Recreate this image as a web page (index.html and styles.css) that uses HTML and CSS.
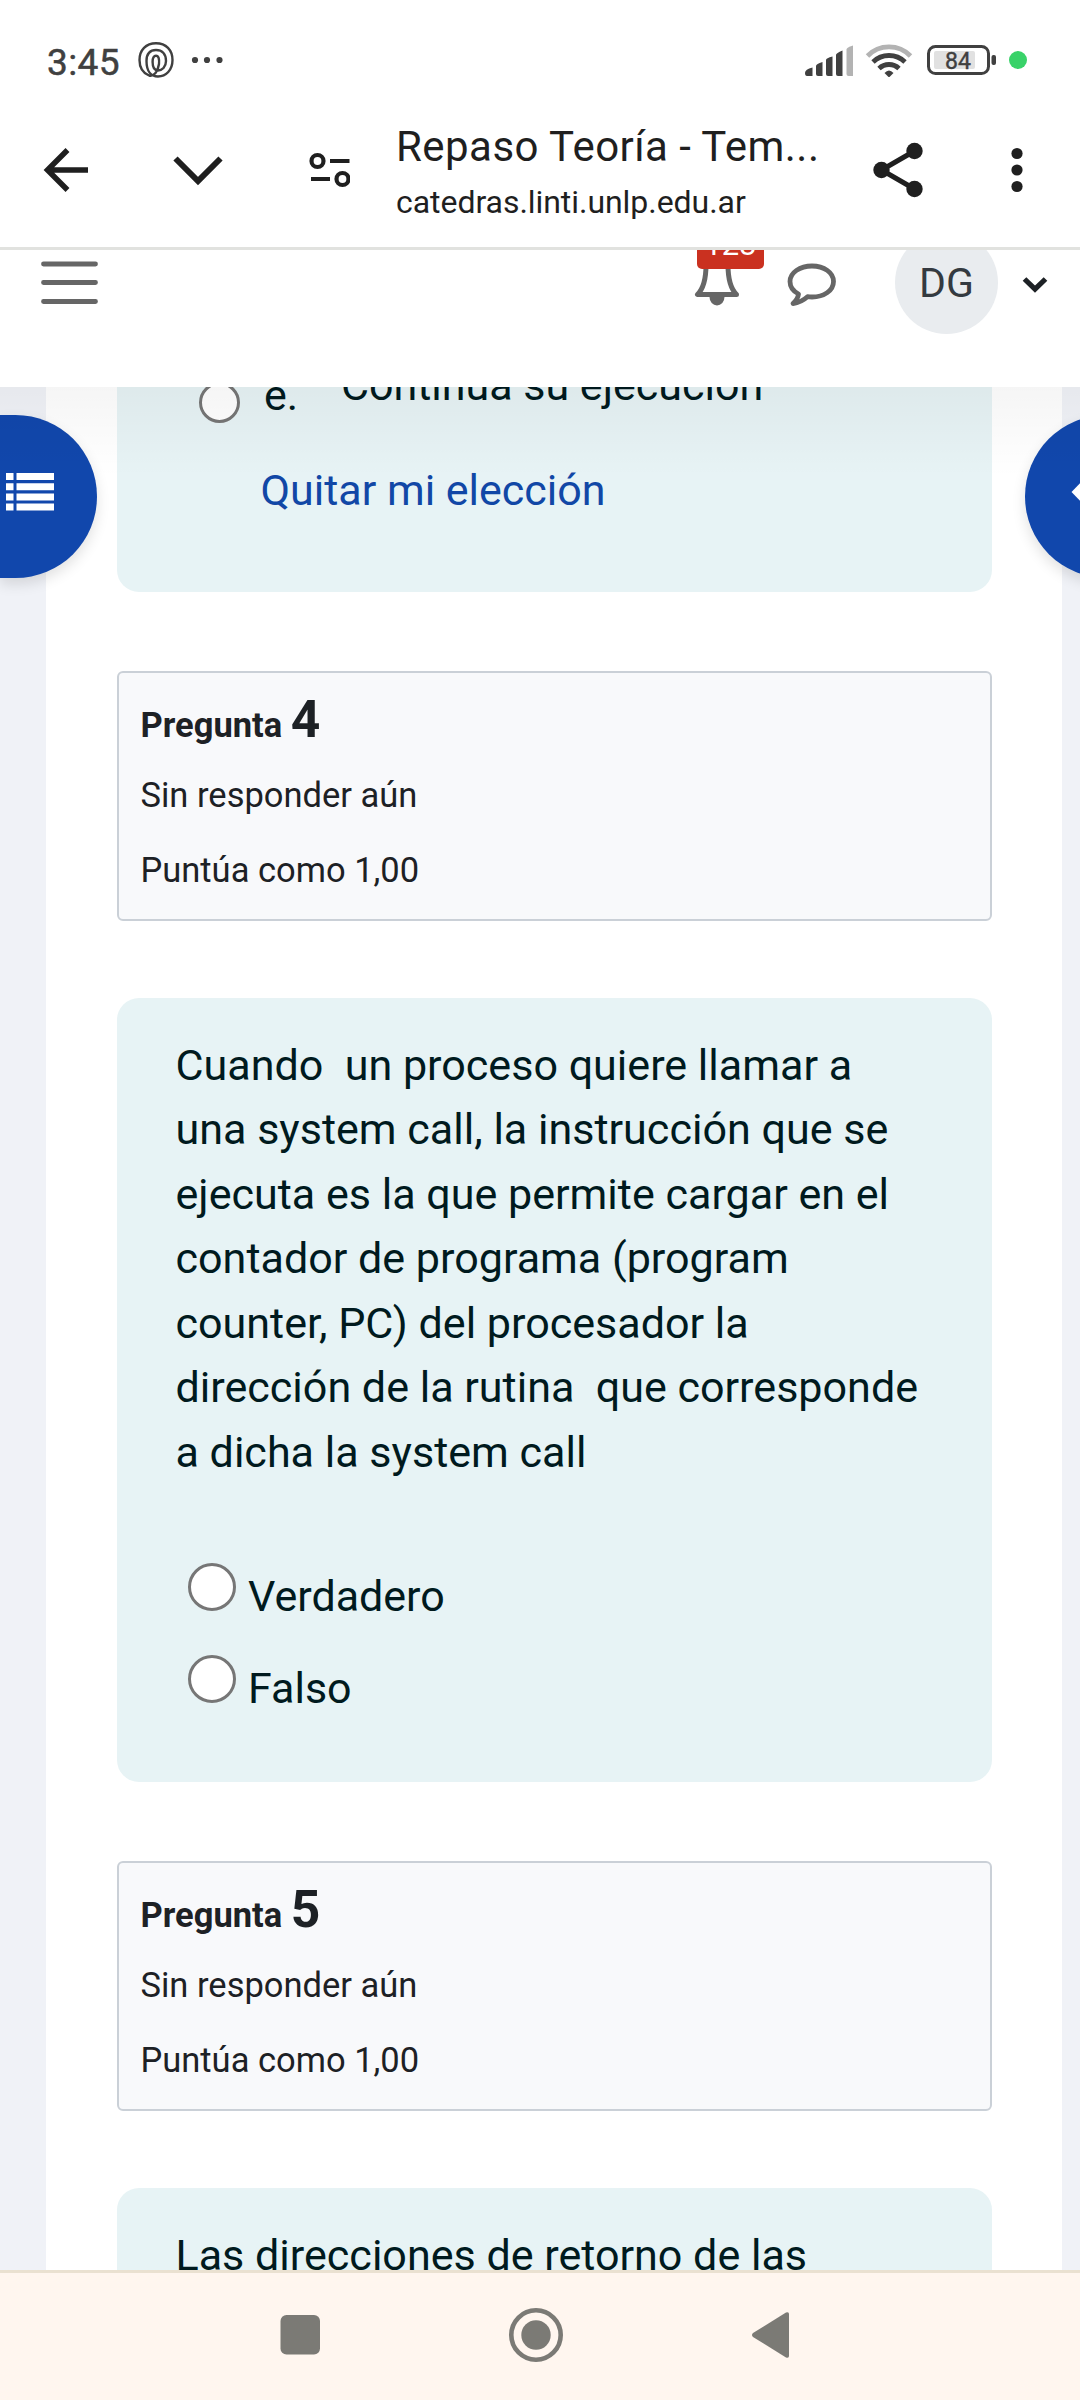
FILE: index.html
```html
<!DOCTYPE html>
<html lang="es">
<head>
<meta charset="utf-8">
<title>Repaso Teoría</title>
<link rel="stylesheet" href="styles.css">
</head>
<body>
<div class="phone">
  <div class="status">
    <span class="clock">3:45</span>
    <svg class="status-app" width="38" height="38" viewBox="137 41 38 38" fill="none" stroke="#404040" stroke-width="2.4">
      <path d="M149 75.500C143 73 139.500 67 139.500 60C139.500 50 146 43.200 156 43.200C166 43.200 172.500 50 172.500 60C172.500 70 166 76.500 158 76.500C151 76.500 146.500 71 146.500 61C146.300 54 150 50 156 50C162 50 166 54 166 61C166 67 162 70.500 158 70.500C154 70.500 152.600 67 152.600 62C152.600 58 154 55.700 156 55.700C158.500 55.700 159.500 59 159 64C158 71 154 77 149 75.500"/>
    </svg>
    <svg class="status-more" width="32" height="8" viewBox="0 0 32 8" fill="#404040"><circle cx="4" cy="4" r="3.100"/><circle cx="16" cy="4" r="3.100"/><circle cx="28.500" cy="4" r="3.100"/></svg>
    <svg class="status-icons" width="230" height="40" viewBox="800 40 230 40">
      <g fill="#404040"><path d="M805 73q0-4 7.500-5.500V76H807q-2 0-2-3zM816 66q0-2 6.500-4V76H818q-2 0-2-2zM826 60q0-2 6.500-3.500V76H828q-2 0-2-2zM836 55q0-2 6.500-4.500V76H838q-2 0-2-2z"/>
      <path fill="#b3b3b3" d="M846.500 49.500q0-2 6.500-4V76H848.500q-2 0-2-2z"/></g>
      <g fill="none" stroke="#404040" stroke-width="4.800"><path stroke="#b3b3b3" d="M867.500 56A30 30 0 0 1 910.500 56"/><path d="M873 62A23 23 0 0 1 905 62M879 68.500A14.500 14.500 0 0 1 899 68.500"/></g>
      <path fill="#404040" d="M884.500 73q4.500-5 9 0l-3.500 3.500q-1 1-2 0z"/>
      <rect x="928.500" y="46.500" width="60" height="27" rx="7" fill="none" stroke="#404040" stroke-width="3"/>
      <rect x="934" y="51" width="41" height="18" rx="2" fill="#e1e1e1"/>
      <rect x="991.500" y="55" width="4.500" height="10" rx="2" fill="#404040"/>
      <text x="958" y="69" text-anchor="middle" class="battery-text">84</text>
      <circle cx="1018" cy="60" r="9" fill="#39d269"/>
    </svg>
  </div>

  <div class="toolbar">
    <svg width="350" height="60" viewBox="0 140 350 60" fill="none" stroke="#1f1f1f">
      <path stroke-width="5.500" d="M88 170H48M67.500 150L47.500 170L67.500 190"/>
      <path stroke-width="6" d="M175.500 158.500L198 181L220.500 158.500"/>
      <g stroke-width="4.200"><circle cx="317.500" cy="161" r="6"/><circle cx="342.500" cy="179" r="6"/><path d="M330 161H349.500M311 179H330"/></g>
    </svg>
    <div class="page-id">
      <div class="page-title">Repaso Teoría - Tem...</div>
      <div class="page-url">catedras.linti.unlp.edu.ar</div>
    </div>
    <svg class="toolbar-right" width="170" height="60" viewBox="865 140 170 60" fill="#1f1f1f">
      <path d="M914.500 151L881.500 170L914.500 189" fill="none" stroke="#1f1f1f" stroke-width="5"/>
      <circle cx="881.500" cy="170" r="8.200"/><circle cx="914.500" cy="151" r="8.200"/><circle cx="914.500" cy="189" r="8.200"/>
      <circle cx="1017" cy="153.500" r="5.600"/><circle cx="1017" cy="170" r="5.600"/><circle cx="1017" cy="186.500" r="5.600"/>
    </svg>
  </div>

  <div class="web">
    <div class="site-header">
      <svg class="menu" width="57" height="46" viewBox="0 0 57 46" stroke="#666" stroke-width="4.800" stroke-linecap="round"><path d="M2.500 4H54.500M2.500 22.500H54.500M2.500 41.500H54.500"/></svg>
      <div class="bell">
        <svg width="46" height="50" viewBox="0 0 46 50"><path d="M12 8Q12 29 3.500 37.500H42.500Q34 29 34 8" fill="none" stroke="#666" stroke-width="5" stroke-linejoin="round"/><path d="M15.500 40h15a7.500 8.500 0 0 1-15 0z" fill="#666"/></svg>
        <span class="badge">123</span>
      </div>
      <svg class="chat" width="50" height="44" viewBox="0 0 50 44" fill="none" stroke="#666" stroke-width="4.800" stroke-linejoin="round"><path d="M25 3C37 3 46.500 9.500 46.500 18.500S37 34 25 34Q22.500 34 20.500 33.700Q14 39.500 6 40.500Q11 36 11.500 31Q3 26.500 3 18.500C3 9.500 13 3 25 3z"/></svg>
      <div class="avatar">DG</div>
      <svg class="caret" width="26" height="18" viewBox="0 0 26 18" fill="none" stroke="#1d2125" stroke-width="5.200"><path d="M2.500 3L13 13.200L23.500 3"/></svg>
    </div>

    <div class="content">
      <div class="sheet">
        <div class="card card-prev">
          <div class="prev-row"><span class="radio radio-small"></span><span class="letter">e.</span><span class="prev-text">Continua su ejecución</span></div>
          <div class="clear">Quitar mi elección</div>
        </div>
        <div class="info">
          <div class="info-title">Pregunta <span class="num">4</span></div>
          <div class="info-state">Sin responder aún</div>
          <div class="info-grade">Puntúa como 1,00</div>
        </div>
        <div class="card card-main">
          <div class="question">Cuando&nbsp; un proceso quiere llamar a<br>una system call, la instrucción que se<br>ejecuta es la que permite cargar en el<br>contador de programa (program<br>counter, PC) del procesador la<br>dirección de la rutina&nbsp; que corresponde<br>a dicha la system call</div>
          <div class="option"><span class="radio"></span><span class="option-text">Verdadero</span></div>
          <div class="option"><span class="radio"></span><span class="option-text">Falso</span></div>
        </div>
        <div class="info">
          <div class="info-title">Pregunta <span class="num">5</span></div>
          <div class="info-state">Sin responder aún</div>
          <div class="info-grade">Puntúa como 1,00</div>
        </div>
        <div class="card card-next">
          <div class="question">Las direcciones de retorno de las</div>
        </div>
      </div>
      <div class="drawer drawer-left"><svg width="48" height="38" viewBox="0 0 48 38" fill="#fff"><path d="M0 0h7.500v7H0zM10.500 0H48v7H10.500zM0 10.200h7.500v7H0zM10.500 10.200H48v7H10.500zM0 20.400h7.500v7H0zM10.500 20.400H48v7H10.500zM0 30.400h7.500v7H0zM10.500 30.400H48v7H10.500z"/></svg></div>
      <div class="drawer drawer-right"><svg width="20" height="38" viewBox="0 0 20 38"><path d="M0.500 19L17 2V36z" fill="#fff"/></svg></div>
      <div class="header-shade"></div>
    </div>
  </div>

  <div class="navbar">
    <svg width="1080" height="127" viewBox="0 2273 1080 127" fill="#7b7a75">
      <rect x="280.500" y="2315" width="39.500" height="39.500" rx="6"/>
      <circle cx="536" cy="2335" r="24.700" fill="none" stroke="#7b7a75" stroke-width="4.600"/><circle cx="536" cy="2335" r="14.700"/>
      <path d="M753 2333L786 2312.500Q789 2311.500 789 2314V2356Q789 2358.500 786 2357.500L753 2337Q751 2335 753 2333z"/>
    </svg>
  </div>
</div>
</body>
</html>
```
FILE: styles.css
```css
* { box-sizing: border-box; }
body { margin: 0; background: #fff; font-family: Roboto, "Liberation Sans", sans-serif; }
svg { display: block; flex: none; }
.phone { width: 1080px; height: 2400px; display: flex; flex-direction: column; overflow: hidden; }

.status { height: 120px; display: flex; align-items: center; padding: 0 50px 0 47px; flex: none; }
.clock { width: 90px; font-size: 37px; font-weight: 400; -webkit-text-stroke: 0.5px #404040; color: #404040; line-height: 40px; padding-top: 5px; letter-spacing: 0.4px; }
.status-more { margin-left: 16px; }
.status-icons { margin-left: auto; }
.battery-text { font-size: 23px; font-weight: 400; fill: #404040; stroke: #404040; stroke-width: 0.4px; }

.toolbar { height: 130px; flex: none; display: flex; border-bottom: 3px solid #e1e2df; padding-top: 20px; }
.page-id { width: 468px; margin-left: 46px; margin-top: -18px; color: #1f1f1f; white-space: nowrap; }
.page-title { font-size: 42px; line-height: 50px; letter-spacing: 0.45px; }
.page-url { font-size: 32px; line-height: 40px; margin-top: 10px; letter-spacing: -0.05px; }
.toolbar-right { margin-left: 1px; }

.web { flex: 1; min-height: 0; display: flex; flex-direction: column; overflow: hidden; }
.site-header { height: 136.5px; flex: none; display: flex; align-items: flex-start; padding-left: 41px; overflow: hidden; background: #fff; }
.menu { margin-top: 10px; }
.bell { position: relative; width: 46px; height: 60px; margin: 7px 0 0 596px; }
.badge { position: absolute; left: 3px; top: -27px; width: 67px; height: 39px; border-radius: 5px; background: #ca3120; color: #fff; font-size: 31px; line-height: 29px; text-align: center; }
.chat { margin: 13px 0 0 47px; }
.avatar { width: 103px; height: 103px; flex: none; margin: -19px 0 0 58px; border-radius: 50%; background: #e9ecef; color: #343a40; font-size: 41px; line-height: 104px; text-align: center; }
.caret { margin: 26px 0 0 24px; }

.content { flex: 1; min-height: 0; position: relative; overflow: hidden; background: #f0f2f7; padding: 0 18px 0 46px; }
.sheet { background: #fff; height: 2100px; padding: 0 70px 0 70.5px; color: #001a1e; }
.card { border-radius: 22px; background: #e7f3f5; }
.card-prev { height: 205px; border-radius: 0 0 22px 22px; overflow: hidden; font-size: 43px; }
.prev-row { display: flex; align-items: flex-start; padding-left: 82.5px; margin-top: -30px; height: 100px; }
.letter { margin: 13px 0 0 24px; width: 77px; line-height: 50px; }
.prev-text { line-height: 50px; margin-top: 3px; }
.clear { margin-left: 144px; line-height: 50px; margin-top: 8px; color: #1147a6; }
.radio { width: 48px; height: 48px; flex: none; border: 3px solid #767676; border-radius: 50%; background: #fff; }
.radio-small { width: 41px; height: 41px; margin-top: 25px; }

.info { height: 250px; margin: 79px 0 77px; border: 2px solid #cad0d7; border-radius: 6px; background: #f8f9fb; padding: 17px 22px; color: #1d2125; font-size: 34.5px; line-height: 42px; }
.info-title { font-weight: 700; line-height: 60px; }
.num { font-size: 51.5px; }
.info-state { margin-top: 19px; }
.info-grade { margin-top: 33px; }

.card-main { height: 784px; padding: 36px 59px; }
.question { font-size: 43.070px; line-height: 64.600px; white-space: nowrap; }
.option { display: flex; margin-left: 12.5px; height: 92px; }
.option:nth-child(2) { margin-top: 77px; }
.option-text { font-size: 43px; line-height: 50px; margin: 8px 0 0 12px; }
.card-next { height: 300px; padding: 36px 59px; }

.drawer { position: absolute; top: 28.5px; height: 163px; background: #1147ac; box-shadow: 0 6px 14px rgba(0,0,0,.12); }
.drawer-left { left: 0; width: 97px; border-radius: 0 82px 82px 0; padding: 58px 0 0 6px; }
.drawer-right { right: -108px; width: 163px; border-radius: 50%; padding: 58px 0 0 46px; }
.header-shade { position: absolute; left: 0; right: 0; top: 0; height: 90px; background: linear-gradient(rgba(0,0,0,.04), rgba(0,0,0,.02) 50%, rgba(0,0,0,0)); }

.navbar { height: 130px; flex: none; background: #fff6ef; border-top: 3px solid #eae1d1; }
```
